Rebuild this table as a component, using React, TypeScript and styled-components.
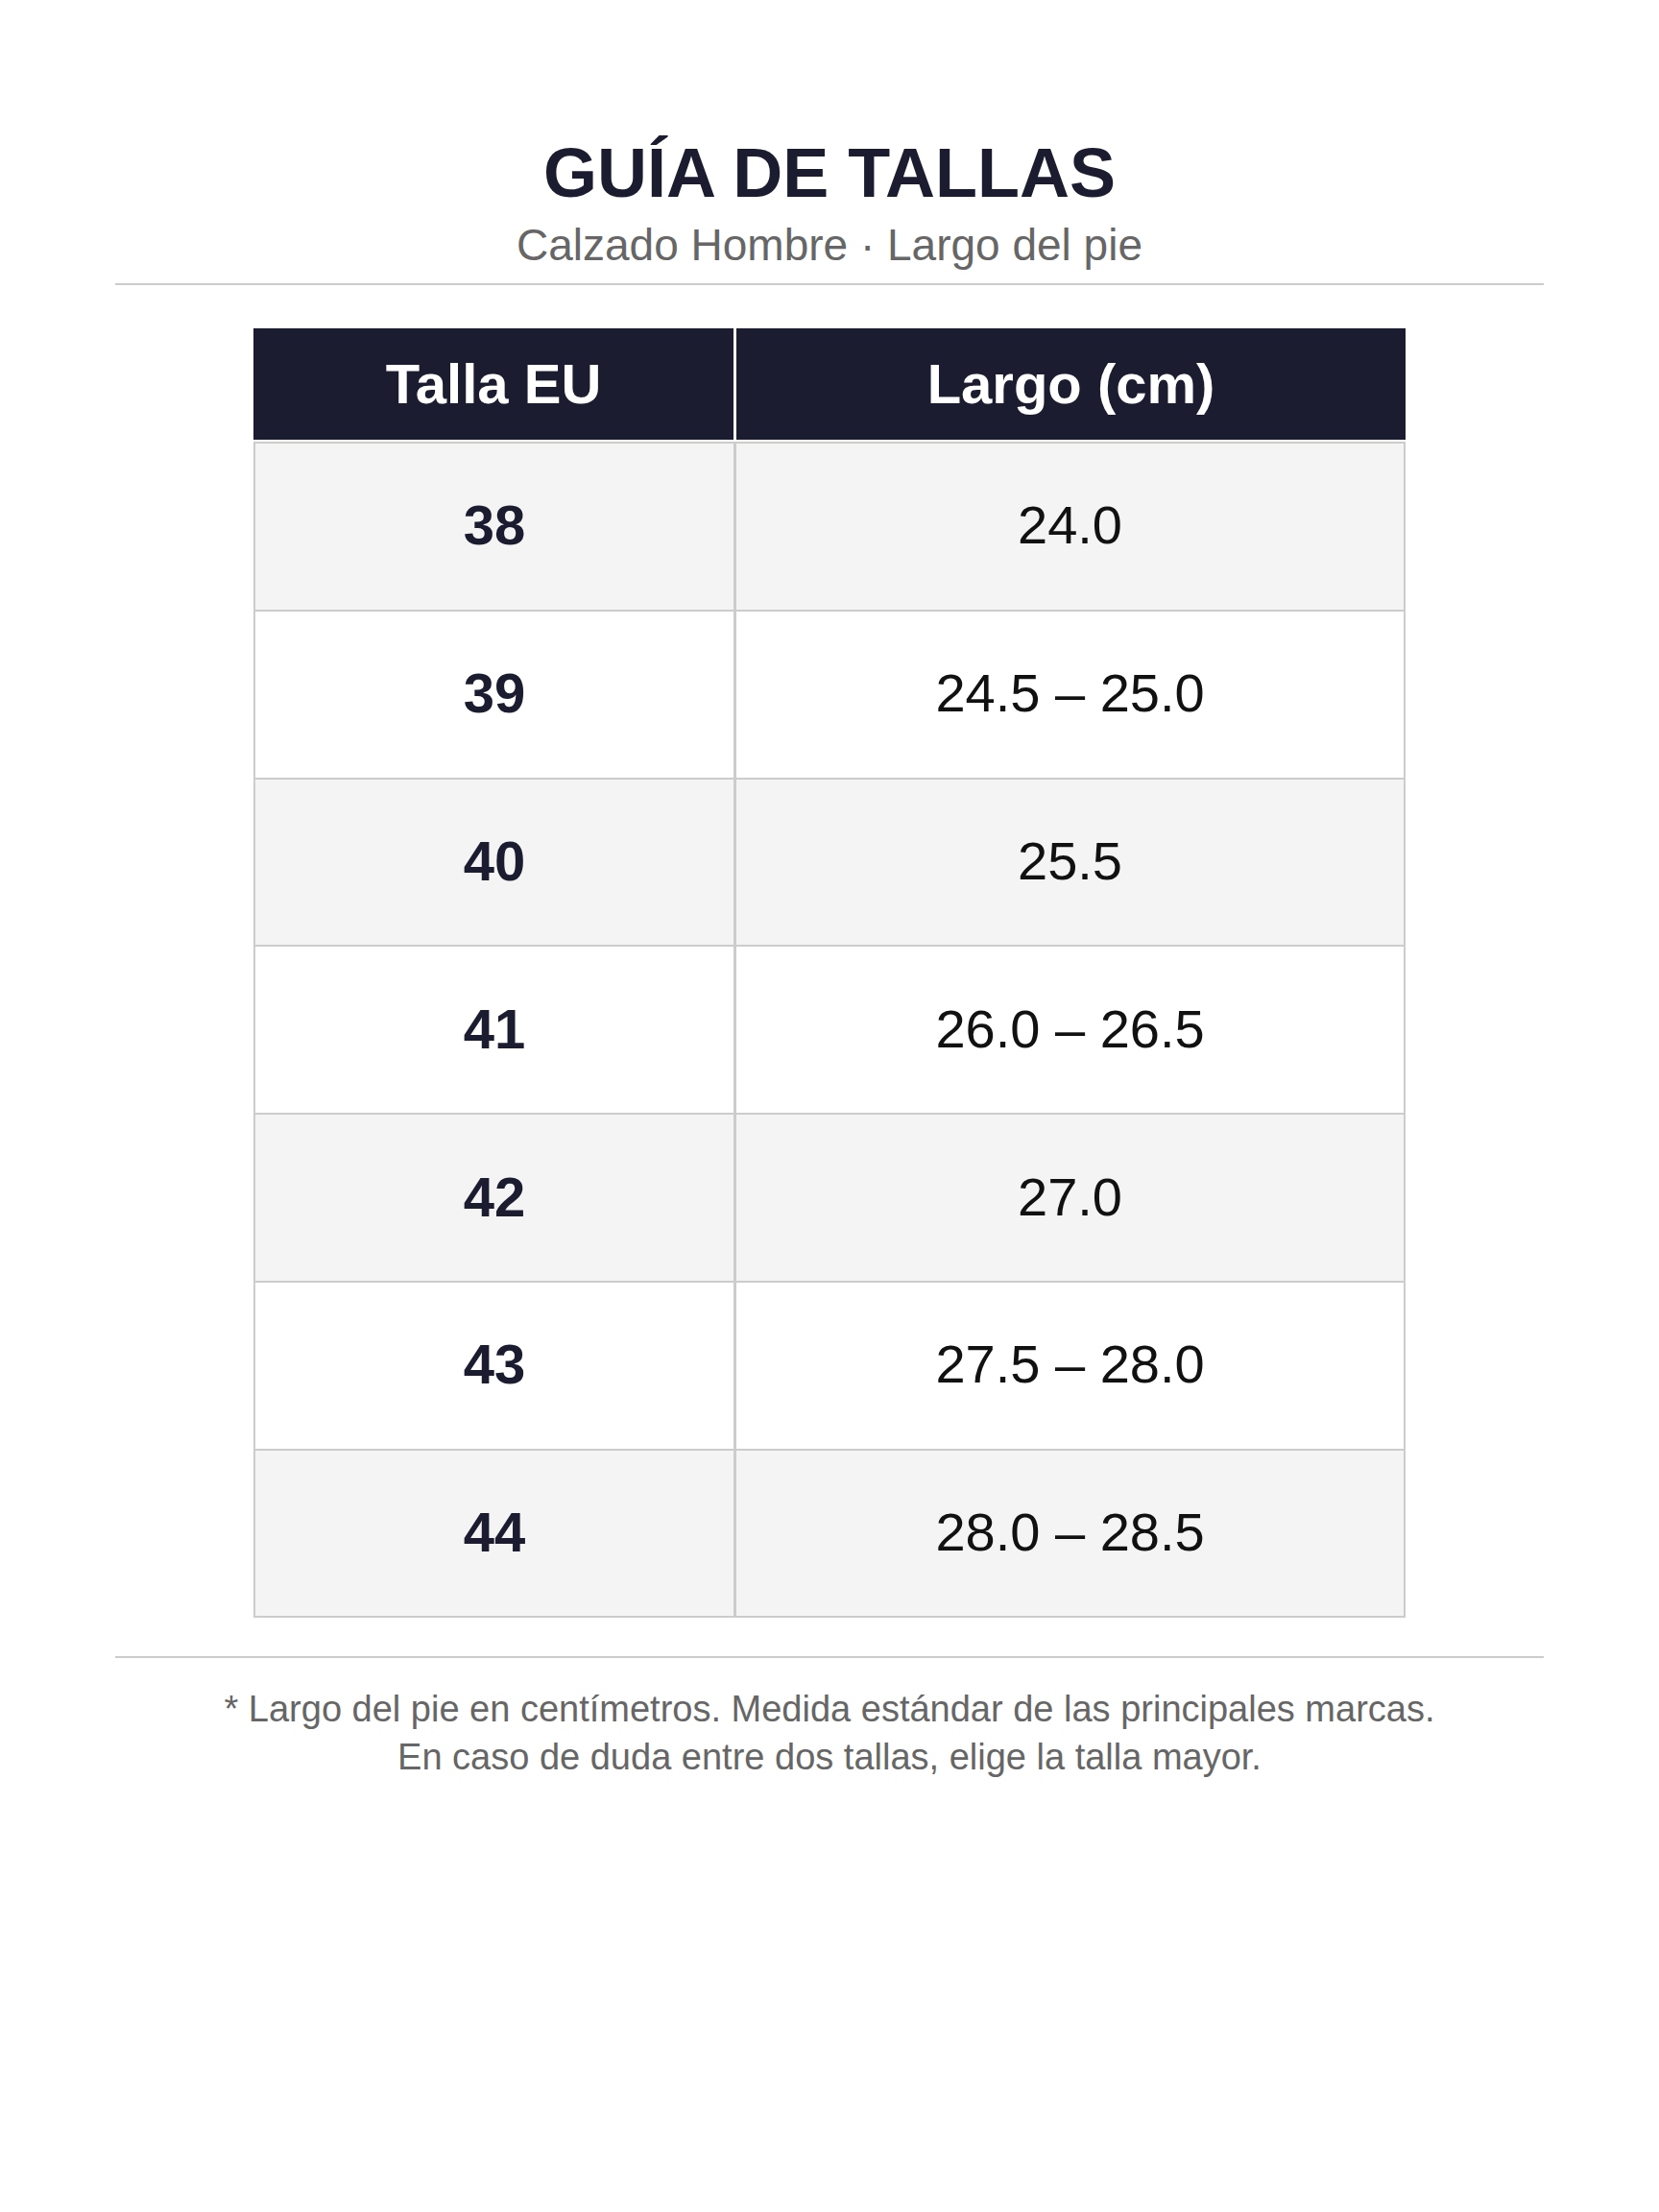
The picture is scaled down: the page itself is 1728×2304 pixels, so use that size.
import React from "react";
import styled, { createGlobalStyle } from "styled-components";

const kRows: [string, string][] = [
  ["38", "24.0"],
  ["39", "24.5 – 25.0"],
  ["40", "25.5"],
  ["41", "26.0 – 26.5"],
  ["42", "27.0"],
  ["43", "27.5 – 28.0"],
  ["44", "28.0 – 28.5"],
];

const GlobalStyle = createGlobalStyle`
  html, body {
    margin: 0;
    padding: 0;
    background: #ffffff;
  }
  body {
    font-family: "Liberation Sans", Arial, sans-serif;
  }
`;

const Page = styled.div`
  padding: 139px 120px 0;
  display: flex;
  flex-direction: column;
  align-items: center;
`;

const Header = styled.header`
  width: 100%;
  display: flex;
  flex-direction: column;
  align-items: center;
  padding-bottom: 14px;
  border-bottom: 2px solid #cccccc;
`;

const Title = styled.h1`
  margin: 0;
  font-size: 72px;
  line-height: 82px;
  font-weight: 700;
  color: #1b1c30;
`;

const Subtitle = styled.div`
  margin-top: 8px;
  font-size: 46px;
  line-height: 52px;
  color: #666666;
`;

const SizeTable = styled.table`
  margin-top: 45px;
  width: 1200px;
  border-collapse: separate;
  border-spacing: 0;
  table-layout: fixed;
`;

const HeadCell = styled.th<{ $first?: boolean }>`
  width: ${(p) => (p.$first ? "500px" : "auto")};
  background: #1b1c30;
  color: #ffffff;
  font-size: 58px;
  line-height: 64px;
  font-weight: 700;
  padding: 26px 0;
  text-align: center;
  border-bottom: 2px solid #ffffff;
  border-right: ${(p) => (p.$first ? "3px solid #ffffff" : "none")};
`;

const Row = styled.tr<{ $shaded: boolean }>`
  background: ${(p) => (p.$shaded ? "#f4f4f4" : "#ffffff")};

  &:first-child td {
    border-top: 2px solid #cccccc;
  }
`;

const Cell = styled.td<{ $size?: boolean }>`
  padding: 53.4px 0 55.4px;
  font-size: ${(p) => (p.$size ? "58px" : "56px")};
  line-height: 64px;
  text-align: center;
  font-weight: ${(p) => (p.$size ? 700 : 400)};
  color: ${(p) => (p.$size ? "#1b1c30" : "#111111")};
  border-bottom: 2px solid #cccccc;
  border-right: ${(p) => (p.$size ? "3px" : "2px")} solid #cccccc;
  border-left: ${(p) => (p.$size ? "2px solid #cccccc" : "none")};
`;

const Footer = styled.footer`
  margin-top: 40px;
  width: 100%;
  border-top: 2px solid #cccccc;
  padding-top: 28px;
  text-align: center;
  font-size: 38px;
  line-height: 50px;
  color: #666666;
`;

export default function App() {
  return (
    <>
      <GlobalStyle />
      <Page>
        <Header>
          <Title>GUÍA DE TALLAS</Title>
          <Subtitle>Calzado Hombre · Largo del pie</Subtitle>
        </Header>
        <SizeTable>
          <thead>
            <tr>
              <HeadCell $first>Talla EU</HeadCell>
              <HeadCell>Largo (cm)</HeadCell>
            </tr>
          </thead>
          <tbody>
            {kRows.map(([size, length], i) => (
              <Row key={size} $shaded={i % 2 === 0}>
                <Cell $size>{size}</Cell>
                <Cell>{length}</Cell>
              </Row>
            ))}
          </tbody>
        </SizeTable>
        <Footer>
          * Largo del pie en centímetros. Medida estándar de las principales marcas.
          <br />
          En caso de duda entre dos tallas, elige la talla mayor.
        </Footer>
      </Page>
    </>
  );
}
